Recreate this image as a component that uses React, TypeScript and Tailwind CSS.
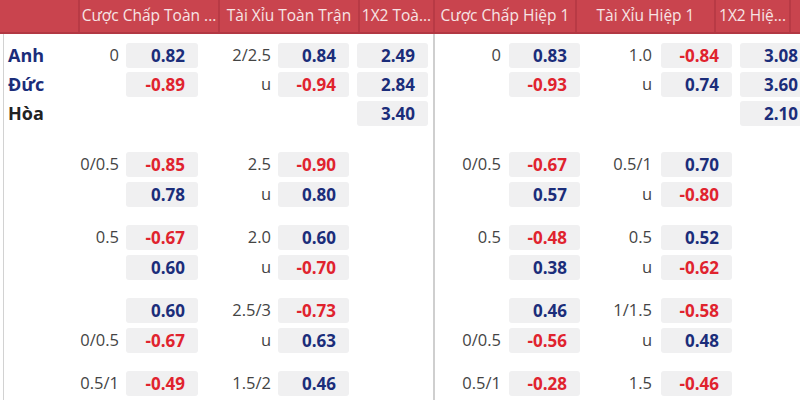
import React from 'react';

type Cell = { label?: string; value?: string };
type Row = { name?: string; nameColor?: string; l1: Cell; l2: Cell; l3?: string; r1: Cell; r2: Cell; r3?: string };

const red = 'text-[#e0232e]';
const blue = 'text-[#1b2d7a]';

const tone = (v?: string) => (v && v.startsWith('-') ? red : blue);

const Box = ({ value, w = 'w-[71px]' }: { value?: string; w?: string }) =>
  value ? (
    <div className={`${w} h-[25px] shrink-0 rounded-[3px] bg-[#f0f0f1] flex items-center justify-end pr-[13px] text-[17px] font-bold ${tone(value)}`}>
      {value}
    </div>
  ) : (
    <div className={`${w} h-[25px] shrink-0`} />
  );

const Label = ({ text, w }: { text?: string; w: string }) => (
  <div className={`${w} shrink-0 text-right text-[16.5px] text-[#444]`}>{text}</div>
);

const main: Row[] = [
  { name: 'Anh', nameColor: 'text-[#1b2d7a]', l1: { label: '0', value: '0.82' }, l2: { label: '2/2.5', value: '0.84' }, l3: '2.49', r1: { label: '0', value: '0.83' }, r2: { label: '1.0', value: '-0.84' }, r3: '3.08' },
  { name: 'Đức', nameColor: 'text-[#1b2d7a]', l1: { value: '-0.89' }, l2: { label: 'u', value: '-0.94' }, l3: '2.84', r1: { value: '-0.93' }, r2: { label: 'u', value: '0.74' }, r3: '3.60' },
  { name: 'Hòa', nameColor: 'text-[#222]', l1: {}, l2: {}, l3: '3.40', r1: {}, r2: {}, r3: '2.10' },
];

const groups: Row[][] = [
  [
    { l1: { label: '0/0.5', value: '-0.85' }, l2: { label: '2.5', value: '-0.90' }, r1: { label: '0/0.5', value: '-0.67' }, r2: { label: '0.5/1', value: '0.70' } },
    { l1: { value: '0.78' }, l2: { label: 'u', value: '0.80' }, r1: { value: '0.57' }, r2: { label: 'u', value: '-0.80' } },
  ],
  [
    { l1: { label: '0.5', value: '-0.67' }, l2: { label: '2.0', value: '0.60' }, r1: { label: '0.5', value: '-0.48' }, r2: { label: '0.5', value: '0.52' } },
    { l1: { value: '0.60' }, l2: { label: 'u', value: '-0.70' }, r1: { value: '0.38' }, r2: { label: 'u', value: '-0.62' } },
  ],
  [
    { l1: { value: '0.60' }, l2: { label: '2.5/3', value: '-0.73' }, r1: { value: '0.46' }, r2: { label: '1/1.5', value: '-0.58' } },
    { l1: { label: '0/0.5', value: '-0.67' }, l2: { label: 'u', value: '0.63' }, r1: { label: '0/0.5', value: '-0.56' }, r2: { label: 'u', value: '0.48' } },
  ],
  [
    { l1: { label: '0.5/1', value: '-0.49' }, l2: { label: '1.5/2', value: '0.46' }, r1: { label: '0.5/1', value: '-0.28' }, r2: { label: '1.5', value: '-0.46' } },
  ],
];

const LeftRow = ({ r }: { r: Row }) => (
  <div className="flex items-center h-[25px]">
    <div className="w-[115px] shrink-0 flex items-center justify-between pl-[4px]">
      <span className={`text-[18px] font-bold ${r.nameColor ?? ''}`}>{r.name}</span>
      <span className="text-[16.5px] text-[#444]">{r.l1.label}</span>
    </div>
    <div className="ml-[7px]"><Box value={r.l1.value} w="w-[72px]" /></div>
    <Label text={r.l2.label} w="w-[73px]" />
    <div className="ml-[7px]"><Box value={r.l2.value} /></div>
    <div className="ml-[8px]"><Box value={r.l3} /></div>
  </div>
);

const RightRow = ({ r }: { r: Row }) => (
  <div className="flex items-center h-[25px]">
    <Label text={r.r1.label} w="w-[66px]" />
    <div className="ml-[8px]"><Box value={r.r1.value} /></div>
    <Label text={r.r2.label} w="w-[72px]" />
    <div className="ml-[9px]"><Box value={r.r2.value} /></div>
    <div className="ml-[8px]"><Box value={r.r3} /></div>
  </div>
);

const headers = [
  { t: '', w: 'w-[78px]' },
  { t: 'Cược Chấp Toàn ...', w: 'w-[140px]' },
  { t: 'Tài Xỉu Toàn Trận', w: 'w-[140px]' },
  { t: '1X2 Toà...', w: 'w-[75px]' },
  { t: 'Cược Chấp Hiệp 1', w: 'w-[142px]' },
  { t: 'Tài Xỉu Hiệp 1', w: 'w-[139px]' },
  { t: '1X2 Hiệ...', w: 'w-[75px]' },
  { t: '', w: 'w-[40px]' },
];

const Section = ({ Comp }: { Comp: React.FC<{ r: Row }> }) => (
  <div className="flex flex-col pt-[9px]">
    <div className="flex flex-col gap-[4px]">
      {main.map((r, i) => <Comp key={i} r={r} />)}
    </div>
    <div className="flex flex-col gap-[18px] mt-[26px]">
      {groups.map((g, i) => (
        <div key={i} className="flex flex-col gap-[5px]">
          {g.map((r, j) => <Comp key={j} r={r} />)}
        </div>
      ))}
    </div>
  </div>
);

export default function App() {
  return (
    <div className="w-[800px] h-[400px] overflow-hidden bg-white" style={{ fontFamily: '"Open Sans", "Noto Sans", sans-serif' }}>
      <div className="flex h-[34px] bg-[#c9444e] border-b-2 border-[#b23843]">
        {headers.map((h, i) => (
          <div
            key={i}
            className={`${h.w} shrink-0 h-full flex items-center justify-center whitespace-nowrap overflow-hidden text-[15.5px] text-[#f7e4e5] ${i > 0 ? 'border-l-2 border-[#b83a45]' : ''}`}
          >
            {h.t}
          </div>
        ))}
      </div>
      <div className="flex h-[366px]">
        <div className="ml-[3px] w-[430px] shrink-0 border-l border-[#d2d2d2]">
          <Section Comp={LeftRow} />
        </div>
        <div className="w-[2px] shrink-0 bg-[#cfcfcf]" />
        <div className="shrink-0">
          <Section Comp={RightRow} />
        </div>
      </div>
    </div>
  );
}
